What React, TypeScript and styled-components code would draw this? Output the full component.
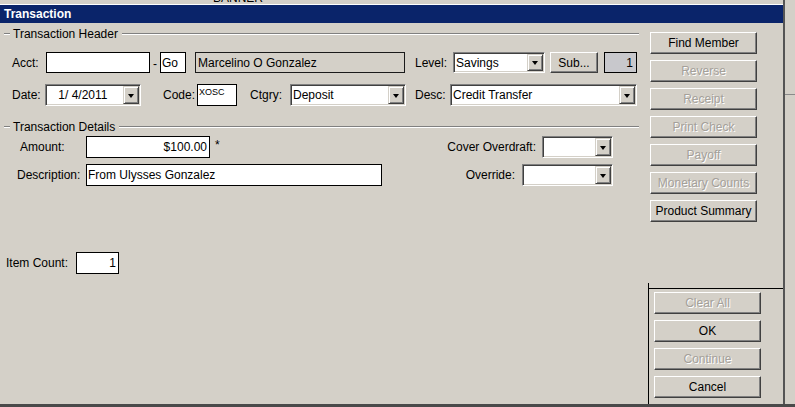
import React from "react";
import styled, { createGlobalStyle } from "styled-components";

const GlobalStyle = createGlobalStyle`
  html, body { margin: 0; padding: 0; background: #d4d0c8; }
  body {
    font-family: "Liberation Sans", Arial, sans-serif;
    font-size: 12px;
    color: #000;
    overflow: hidden;
  }
  * { box-sizing: border-box; }
`;

const Frame = styled.div`
  display: flex;
  width: 795px;
  height: 407px;
  border-bottom: 3px solid #4a4a4a;
  background: #d4d0c8;
`;

const MainWindow = styled.div`
  width: 785px;
  display: flex;
  flex-direction: column;
  border-right: 2px solid #555555;
`;

const SideStrip = styled.div`
  flex: 1;
  display: flex;
  flex-direction: column;
`;

const SideRule = styled.div`
  margin-top: 94px;
  height: 1px;
  background: #8a8a8a;
`;

const TopStrip = styled.div`
  height: 5px;
  border-bottom: 1px solid #ffffff;
  overflow: hidden;
  padding-left: 213px;
`;

const BannerText = styled.div`
  margin-top: -8px;
  font-size: 12px;
  line-height: 12px;
  color: #000;
`;

const TitleBar = styled.div`
  height: 18px;
  background: #0a246a;
  color: #ffffff;
  font-weight: bold;
  font-size: 12px;
  padding-left: 4px;
  display: flex;
  align-items: center;
`;

const Body = styled.div`
  flex: 1;
  display: flex;
`;

const FormCol = styled.div`
  width: 648px;
  display: flex;
  flex-direction: column;
`;

const Legend = styled.div<{ $mt: number }>`
  display: flex;
  align-items: center;
  height: 14px;
  width: 639px;
  padding-left: 4px;
  margin-top: ${(p) => p.$mt}px;
`;

const EtchLine = styled.div<{ $w?: number }>`
  height: 2px;
  border-top: 1px solid #808080;
  border-bottom: 1px solid #ffffff;
  ${(p) => (p.$w ? `width: ${p.$w}px;` : "flex: 1;")}
`;

const LegendText = styled.span`
  padding: 0 4px 0 3px;
  white-space: nowrap;
`;

const Row = styled.div<{ $mt: number; $h?: number }>`
  display: flex;
  align-items: center;
  margin-top: ${(p) => p.$mt}px;
  height: ${(p) => p.$h ?? 22}px;
`;

const Label = styled.span<{ $ml?: number; $w?: number; $right?: boolean }>`
  flex-shrink: 0;
  white-space: nowrap;
  margin-left: ${(p) => p.$ml ?? 0}px;
  ${(p) => (p.$w ? `width: ${p.$w}px;` : "")}
  text-align: ${(p) => (p.$right ? "right" : "left")};
  padding-right: ${(p) => (p.$right ? 2 : 0)}px;
`;

const TextBox = styled.div<{ $w: number; $right?: boolean }>`
  flex-shrink: 0;
  width: ${(p) => p.$w}px;
  height: 100%;
  background: #ffffff;
  border: 1px solid #000000;
  display: flex;
  align-items: center;
  justify-content: ${(p) => (p.$right ? "flex-end" : "flex-start")};
  padding: 0 2px 0 1px;
  white-space: nowrap;
`;

const CodeBox = styled(TextBox)`
  font-size: 9px;
  align-items: flex-start;
  padding-top: 2px;
`;

const Dash = styled.span`
  width: 10px;
  text-align: center;
  align-self: flex-end;
  padding-bottom: 3px;
  line-height: 12px;
`;

const NameBox = styled.div`
  flex-shrink: 0;
  margin-left: 9px;
  width: 210px;
  height: 100%;
  border: 1px solid #1a1a1a;
  display: flex;
  align-items: center;
  padding-left: 2px;
  white-space: nowrap;
`;

const CountBox = styled.div`
  flex-shrink: 0;
  margin-left: 6px;
  width: 33px;
  height: 100%;
  background: #c8c8cc;
  border: 1px solid #000000;
  display: flex;
  align-items: center;
  justify-content: flex-end;
  padding-right: 3px;
`;

const SelectBox = styled.div<{ $w: number }>`
  flex-shrink: 0;
  width: ${(p) => p.$w}px;
  height: 100%;
  display: flex;
  background: #ffffff;
  border: 1px solid;
  border-color: #808080 #ffffff #ffffff #808080;
  box-shadow: inset 1px 1px 0 #404040, inset -1px -1px 0 #d4d0c8;
  padding: 1px;
`;

const SelectValue = styled.span<{ $pad?: number }>`
  flex: 1;
  display: flex;
  align-items: center;
  padding-left: ${(p) => p.$pad ?? 1}px;
  white-space: pre;
  overflow: hidden;
`;

const DropBtn = styled.span`
  width: 16px;
  height: 100%;
  background: #d4d0c8;
  border: 1px solid;
  border-color: #d4d0c8 #404040 #404040 #d4d0c8;
  box-shadow: inset 1px 1px 0 #ffffff, inset -1px -1px 0 #808080;
  display: flex;
  align-items: center;
  justify-content: center;
`;

const Arrow = styled.span`
  width: 0;
  height: 0;
  border-left: 3.5px solid transparent;
  border-right: 3.5px solid transparent;
  border-top: 4px solid #000000;
  margin-top: 1px;
`;

const Btn = styled.button<{ $w: number; $h?: number; $ml?: number; $dim?: boolean }>`
  flex-shrink: 0;
  width: ${(p) => p.$w}px;
  height: ${(p) => p.$h ?? 22}px;
  margin-left: ${(p) => p.$ml ?? 0}px;
  padding: 0;
  background: #d4d0c8;
  font-family: "Liberation Sans", Arial, sans-serif;
  font-size: 12px;
  border: 1px solid;
  border-color: #ffffff #404040 #404040 #ffffff;
  box-shadow: inset -1px -1px 0 #808080;
  color: ${(p) => (p.$dim ? "#a4a09a" : "#000000")};
  text-shadow: ${(p) => (p.$dim ? "1px 1px 0 #ffffff" : "none")};
  white-space: nowrap;
  cursor: default;
`;

const Star = styled.span`
  margin-left: 5px;
  align-self: flex-start;
  padding-top: 2px;
`;

const RightGroup = styled.div<{ $gap: number }>`
  margin-left: auto;
  margin-right: 35px;
  height: 100%;
  display: flex;
  align-items: center;
  gap: ${(p) => p.$gap}px;
`;

const RightCol = styled.div`
  width: 135px;
  display: flex;
  flex-direction: column;
`;

const TopButtons = styled.div`
  display: flex;
  flex-direction: column;
  gap: 6px;
  margin-top: 9px;
  padding-left: 2px;
`;

const BottomPanel = styled.div`
  margin-top: auto;
  height: 121px;
  border-left: 1px solid #000000;
  padding-top: 5px;
`;

const BottomInner = styled.div`
  border-top: 1px solid #000000;
  padding: 3px 0 0 5px;
  display: flex;
  flex-direction: column;
  gap: 6px;
`;

type SelectProps = { w: number; value?: string; pad?: number };

const Select = ({ w, value = "", pad }: SelectProps) => (
  <SelectBox $w={w}>
    <SelectValue $pad={pad}>{value}</SelectValue>
    <DropBtn>
      <Arrow />
    </DropBtn>
  </SelectBox>
);

const topButtons: { label: string; dim: boolean }[] = [
  { label: "Find Member", dim: false },
  { label: "Reverse", dim: true },
  { label: "Receipt", dim: true },
  { label: "Print Check", dim: true },
  { label: "Payoff", dim: true },
  { label: "Monetary Counts", dim: true },
  { label: "Product Summary", dim: false },
];

const bottomButtons: { label: string; dim: boolean }[] = [
  { label: "Clear All", dim: true },
  { label: "OK", dim: false },
  { label: "Continue", dim: true },
  { label: "Cancel", dim: false },
];

export default function App() {
  return (
    <>
      <GlobalStyle />
      <Frame>
        <MainWindow>
          <TopStrip>
            <BannerText>BANNER</BannerText>
          </TopStrip>
          <TitleBar>Transaction</TitleBar>
          <Body>
            <FormCol>
              <Legend $mt={4}>
                <EtchLine $w={6} />
                <LegendText>Transaction Header</LegendText>
                <EtchLine />
              </Legend>
              <Row $mt={11} $h={21}>
                <Label $ml={12} $w={34}>Acct:</Label>
                <TextBox $w={104} />
                <Dash>-</Dash>
                <TextBox $w={26}>Go</TextBox>
                <NameBox>Marcelino O Gonzalez</NameBox>
                <Label $ml={10} $w={38}>Level:</Label>
                <Select w={92} value="Savings" />
                <Btn $w={48} $h={21} $ml={5}>Sub...</Btn>
                <CountBox>1</CountBox>
              </Row>
              <Row $mt={11}>
                <Label $ml={12} $w={33}>Date:</Label>
                <Select w={96} value=" 1/ 4/2011" pad={8} />
                <Label $ml={8} $w={48} $right>Code:</Label>
                <CodeBox $w={40}>XOSC</CodeBox>
                <Label $ml={13} $w={40}>Ctgry:</Label>
                <Select w={116} value="Deposit" />
                <Label $ml={9} $w={35}>Desc:</Label>
                <Select w={187} value="Credit Transfer" />
              </Row>
              <Legend $mt={14}>
                <EtchLine $w={6} />
                <LegendText>Transaction Details</LegendText>
                <EtchLine />
              </Legend>
              <Row $mt={2}>
                <Label $ml={20} $w={66}>Amount:</Label>
                <TextBox $w={124} $right>$100.00</TextBox>
                <Star>*</Star>
                <RightGroup $gap={6}>
                  <Label>Cover Overdraft:</Label>
                  <Select w={71} />
                </RightGroup>
              </Row>
              <Row $mt={6}>
                <Label $ml={17} $w={69}>Description:</Label>
                <TextBox $w={296}>From Ulysses Gonzalez</TextBox>
                <RightGroup $gap={7}>
                  <Label>Override:</Label>
                  <Select w={91} />
                </RightGroup>
              </Row>
              <Row $mt={66}>
                <Label $ml={6} $w={70}>Item Count:</Label>
                <TextBox $w={43} $right>1</TextBox>
              </Row>
            </FormCol>
            <RightCol>
              <TopButtons>
                {topButtons.map((b) => (
                  <Btn key={b.label} $w={107} $dim={b.dim}>
                    {b.label}
                  </Btn>
                ))}
              </TopButtons>
              <BottomPanel>
                <BottomInner>
                  {bottomButtons.map((b) => (
                    <Btn key={b.label} $w={107} $dim={b.dim}>
                      {b.label}
                    </Btn>
                  ))}
                </BottomInner>
              </BottomPanel>
            </RightCol>
          </Body>
        </MainWindow>
        <SideStrip>
          <SideRule />
        </SideStrip>
      </Frame>
    </>
  );
}
